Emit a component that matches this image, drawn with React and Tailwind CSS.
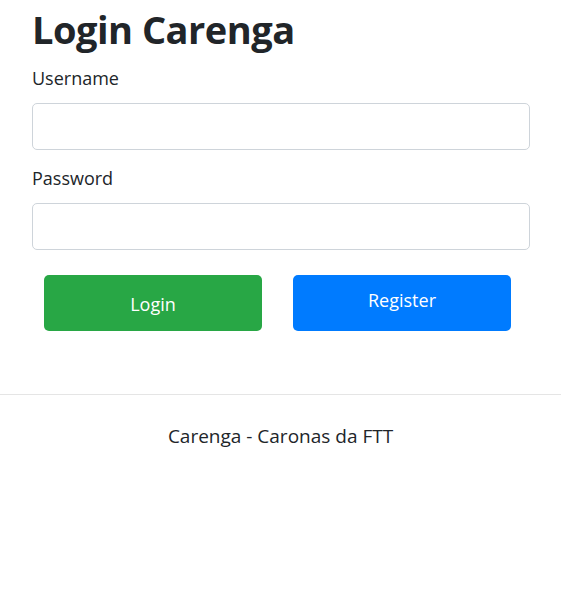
import React, { useState } from 'react';

const App = () => {
  const [username, setUsername] = useState('');
  const [password, setPassword] = useState('');

  return (
    <div
      className="w-[561px] min-h-[598px] bg-white text-[#212529]"
      style={{ fontFamily: '"Open Sans", "Noto Sans", sans-serif' }}
    >
      <div className="pl-[32px] pr-[31px]">
        <h1 className="text-[38px] leading-[58px] font-bold tracking-[-0.5px] mb-[6px]">Login Carenga</h1>

        {/* Username */}
        <div className="mb-[14px]">
          <label className="block text-[18px] leading-[29px] mb-[10px]">Username</label>
          <input
            type="text"
            value={username}
            onChange={(e) => setUsername(e.target.value)}
            className="block w-full h-[47px] border border-[#ced4da] rounded-[5px] px-3 outline-none"
          />
        </div>

        {/* Password */}
        <div>
          <label className="block text-[18px] leading-[29px] mb-[10px]">Password</label>
          <input
            type="password"
            value={password}
            onChange={(e) => setPassword(e.target.value)}
            className="block w-full h-[47px] border border-[#ced4da] rounded-[5px] px-3 outline-none"
          />
        </div>

        {/* Botões */}
        <div className="flex mt-[25px]">
          <div className="w-1/2 pl-[12px]">
            <button
              type="button"
              className="w-[218px] h-[56px] pt-[2px] bg-[#28a745] text-white text-[18px] rounded-[5px]"
            >
              Login
            </button>
          </div>
          <div className="w-1/2 pl-[12px]">
            <a
              href="#"
              className="flex items-start justify-center w-[218px] h-[56px] pt-[12px] bg-[#007bff] text-white text-[18px] rounded-[5px]"
            >
              Register
            </a>
          </div>
        </div>
      </div>

      <hr className="mt-[63px] border-t border-[#e5e5e5]" />

      <footer className="text-center text-[19px] pt-[27px]">Carenga - Caronas da FTT</footer>
    </div>
  );
};

export default App;
